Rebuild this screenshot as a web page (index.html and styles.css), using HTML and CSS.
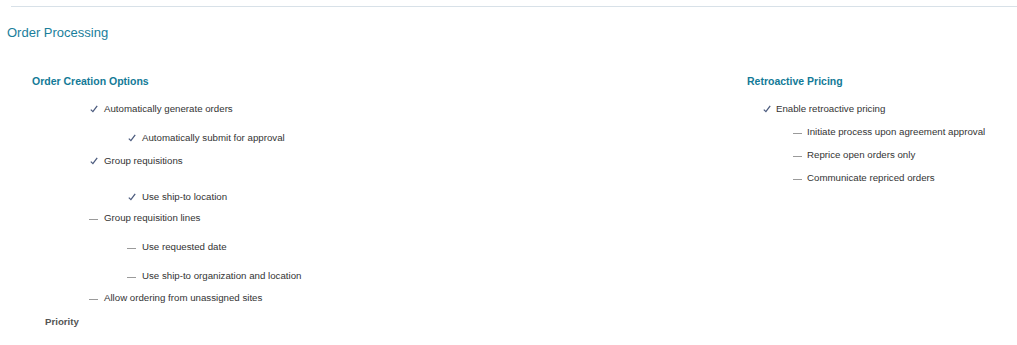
FILE: index.html
```html
<!DOCTYPE html>
<html lang="en">
<head>
    <meta charset="UTF-8">
    <title>Order Processing</title>
    <link rel="stylesheet" href="styles.css">
</head>
<body>
    <div class="rule"></div>
    <h1 class="page-title">Order Processing</h1>

    <div class="columns">
        <div class="col col-left">
            <h2 class="group-title">Order Creation Options</h2>
            <ul class="opts">
                <li class="opt on"><span class="ico"><svg viewBox="0 0 8 8"><path d="M0.8 4.6 L2.9 6.6 L7.2 0.8"/></svg></span>Automatically generate orders</li>
                <li class="opt on sub gap7"><span class="ico"><svg viewBox="0 0 8 8"><path d="M0.8 4.6 L2.9 6.6 L7.2 0.8"/></svg></span>Automatically submit for approval</li>
                <li class="opt on gap1"><span class="ico"><svg viewBox="0 0 8 8"><path d="M0.8 4.6 L2.9 6.6 L7.2 0.8"/></svg></span>Group requisitions</li>
                <li class="opt on sub gap14"><span class="ico"><svg viewBox="0 0 8 8"><path d="M0.8 4.6 L2.9 6.6 L7.2 0.8"/></svg></span>Use ship-to location</li>
                <li class="opt off tight"><span class="ico"><i class="dash"></i></span>Group requisition lines</li>
                <li class="opt off sub gap7"><span class="ico"><i class="dash"></i></span>Use requested date</li>
                <li class="opt off sub gap7"><span class="ico"><i class="dash"></i></span>Use ship-to organization and location</li>
                <li class="opt off"><span class="ico"><i class="dash"></i></span>Allow ordering from unassigned sites</li>
            </ul>
            <div class="field-label">Priority</div>
        </div>

        <div class="col col-right">
            <h2 class="group-title">Retroactive Pricing</h2>
            <ul class="opts">
                <li class="opt on gap1"><span class="ico"><svg viewBox="0 0 8 8"><path d="M0.8 4.6 L2.9 6.6 L7.2 0.8"/></svg></span>Enable retroactive pricing</li>
                <li class="opt off sub"><span class="ico"><i class="dash"></i></span>Initiate process upon agreement approval</li>
                <li class="opt off sub"><span class="ico"><i class="dash"></i></span>Reprice open orders only</li>
                <li class="opt off sub"><span class="ico"><i class="dash"></i></span>Communicate repriced orders</li>
            </ul>
        </div>
    </div>
</body>
</html>
```

FILE: styles.css
```css
* {
    box-sizing: border-box;
    margin: 0;
    padding: 0;
}

body {
    font-family: "Liberation Sans", Arial, sans-serif;
    font-size: 9.7px;
    color: #333;
    background: #fff;
}

.rule {
    height: 1px;
    margin: 6px 0 0 11px;
    background: #d8e1e8;
}

.page-title {
    font-size: 13px;
    font-weight: normal;
    color: #1a7e9b;
    margin: 18px 0 0 7px;
    line-height: 15px;
}

.columns {
    display: grid;
    grid-template-columns: 715px 1fr;
    padding-left: 32px;
    margin-top: 34px;
}

.group-title {
    font-size: 10.5px;
    font-weight: bold;
    color: #137a97;
    line-height: 14px;
}

.opts {
    list-style: none;
    margin-top: 10px;
}

.opt {
    display: flex;
    align-items: center;
    height: 22px;
    line-height: 22px;
}

.col-left .opt {
    padding-left: 57px;
}

.col-left .opt.sub {
    padding-left: 95px;
}

.col-right .opt {
    padding-left: 15px;
}

.col-right .opt.sub {
    padding-left: 46px;
    margin-top: 1px;
}

.gap1 { margin-top: 1px; }
.gap7 { margin-top: 7px; }
.gap14 { margin-top: 14px; }
.tight { margin-top: -1px; }

.ico {
    width: 15px;
    height: 10px;
    display: flex;
    align-items: center;
    flex-shrink: 0;
}

.ico svg {
    width: 8px;
    height: 8px;
    margin-left: 1px;
    fill: none;
    stroke: #4c5b7e;
    stroke-width: 1.3;
}

.col-right .ico {
    width: 14px;
}

.dash {
    display: block;
    width: 9px;
    height: 1px;
    background: #9a9a9a;
    margin-top: 2px;
}

.field-label {
    font-weight: bold;
    color: #555;
    margin: 6px 0 0 13px;
    line-height: 14px;
}
```
